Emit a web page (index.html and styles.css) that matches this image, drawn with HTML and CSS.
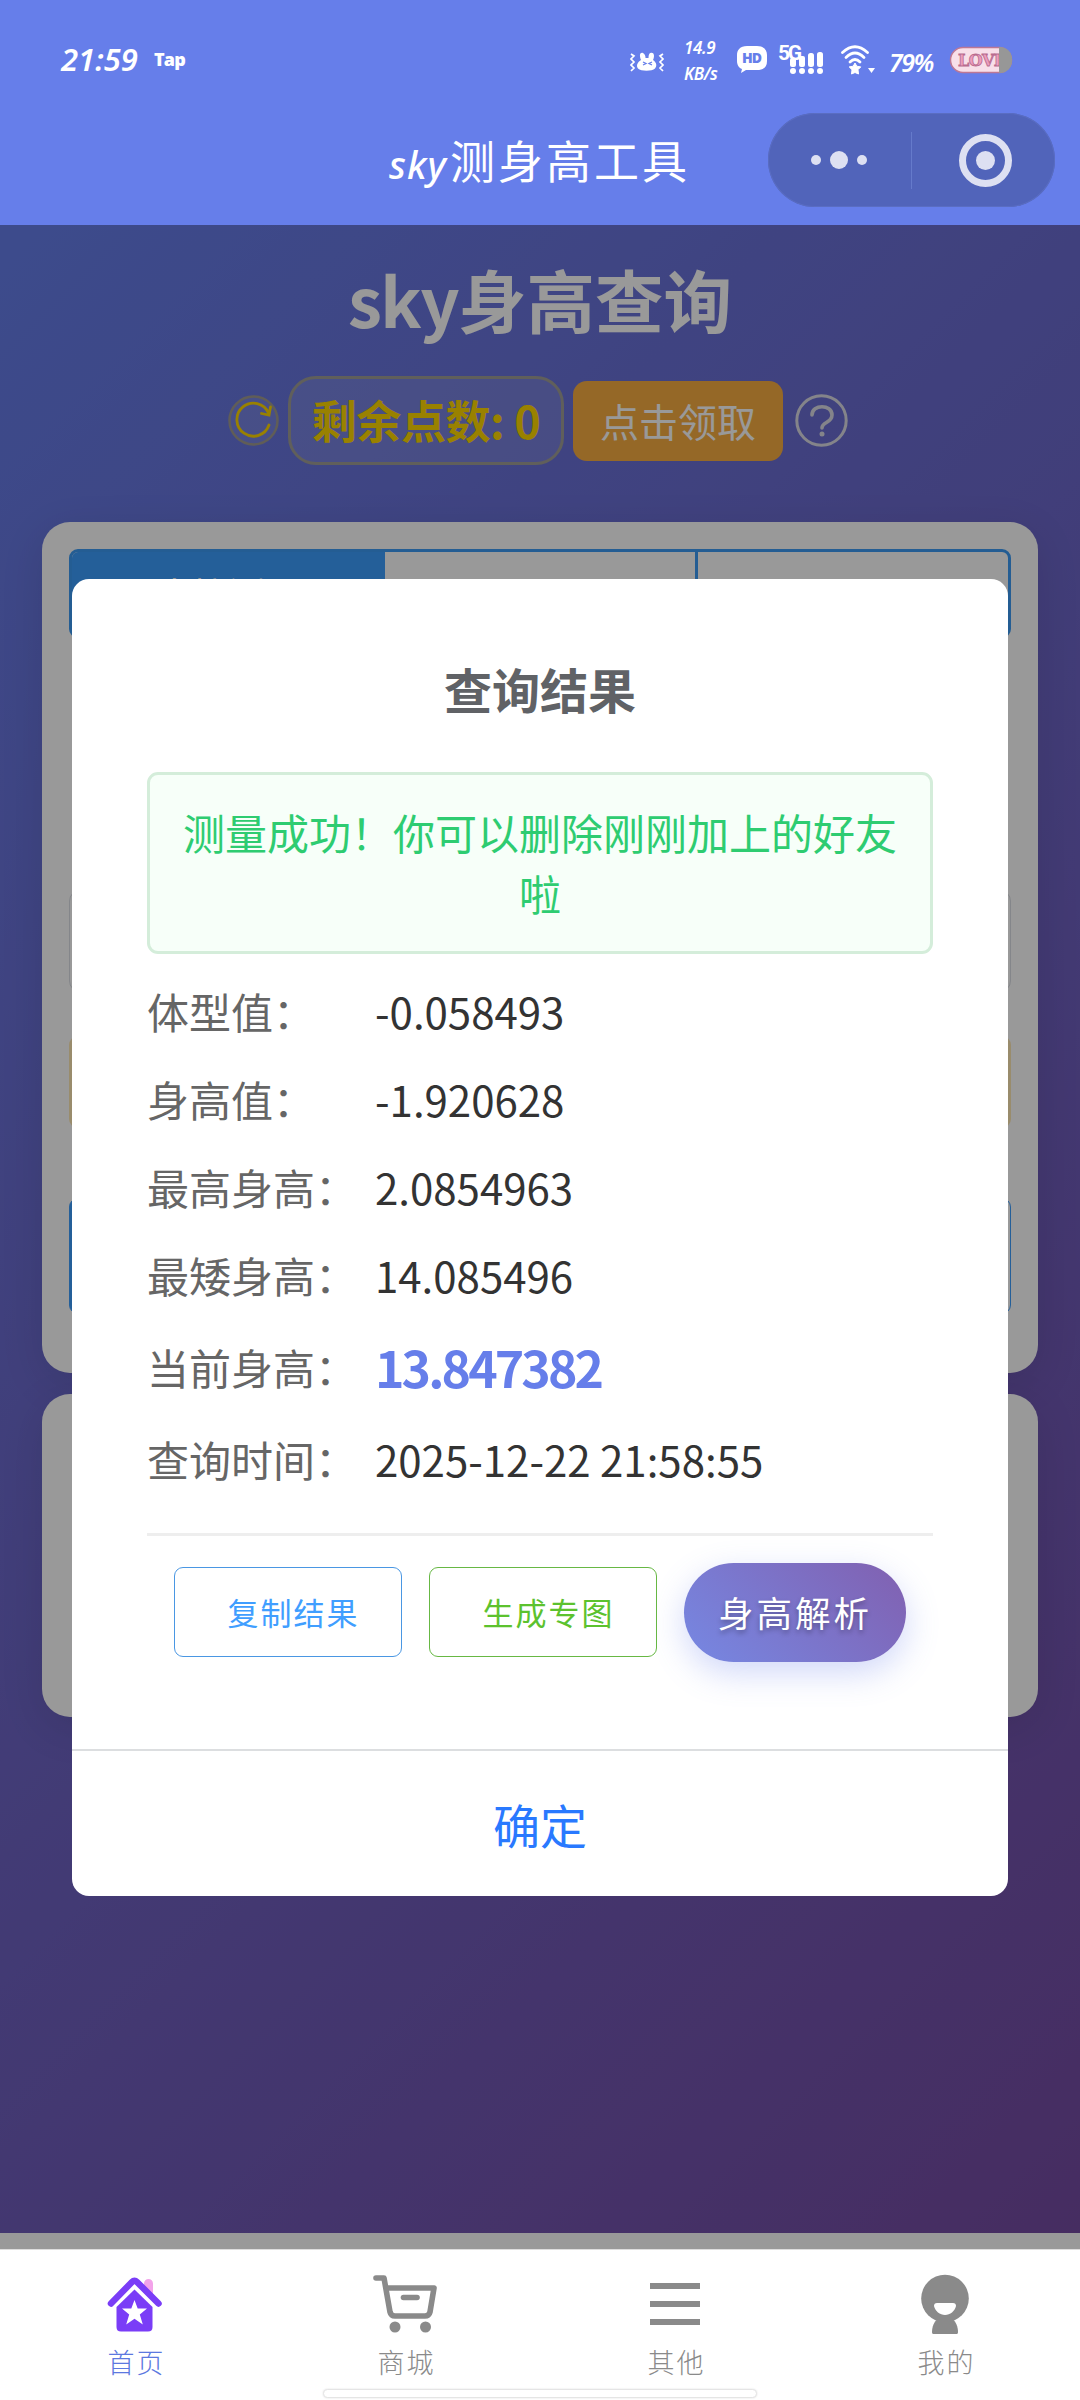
FILE: index.html
```html
<!DOCTYPE html>
<html lang="zh-CN">
<head>
<meta charset="utf-8">
<title>sky测身高工具</title>
<link rel="stylesheet" href="styles.css">
</head>
<body>
<div class="phone">
  <header class="header">
    <div class="status">
      <span class="time">21:59</span>
      <span class="carrier">Tap</span>
      <span class="spacer"></span>
      <svg class="ic-vibrate" width="34" height="20" viewBox="0 0 34 20"><path d="M11 8C9 3 10 0 13 1c2 1 2.500 3 2.500 5h3C18.500 3 19 1 21 .7c3-.5 4 3 2 7.300 4 3 4 6 2 8.500-3 3-14 3-17 0-2-2.500-1-6 3-8.500z" fill="#fff"/><path d="M13 10l3 1.500-3 1.500M22 10l-3 1.500 3 1.500" fill="none" stroke="#667eea" stroke-width="1.300"/><path d="M1 2l3 2-3 3 3 3-3 3 3 3-3 3M33 2l-3 2 3 3-3 3 3 3-3 3 3 3" fill="none" stroke="#fff" stroke-width="1.700"/></svg>
      <span class="speed"><span>14.9</span><span>KB/s</span></span>
      <svg class="ic-hd" width="30" height="28" viewBox="0 0 30 28"><path d="M10 0h10c7 0 10 4 10 9v6c0 6-3 9-10 9h-11l-5 3 1-4c-3-1-5-4-5-8V9c0-5 3-9 10-9z" fill="#fff"/><text x="15" y="17" text-anchor="middle" textLength="20" class="hd-text">HD</text></svg>
      <svg class="ic-signal" width="52" height="36" viewBox="-6 -2 52 36"><g fill="#fff"><rect x="12" y="14" width="6" height="9" rx="2"/><rect x="21" y="12" width="6" height="11" rx="2"/><rect x="30" y="9" width="6" height="14" rx="2.500"/><rect x="39" y="8" width="6" height="15" rx="2.500"/><circle cx="15" cy="27" r="3"/><circle cx="24" cy="27" r="3"/><circle cx="33" cy="27" r="3"/><circle cx="42" cy="27" r="3"/></g><text x="0" y="16" class="g-text" textLength="24">5G</text></svg>
      <svg class="ic-wifi" width="36" height="30" viewBox="0 0 36 30"><g fill="none" stroke="#fff" stroke-width="2.800" stroke-linecap="round"><path d="M1.500 7.500Q14-4 26.500 7.500"/><path d="M5 12.500Q14 3.500 23 12.500"/><path d="M9 17Q14 12 19 17"/></g><path d="M14 18l1.800 3.200 4 .7-2.800 2.800.5 4.300-3.500-1.500-3.500 1.500.5-4.300-2.800-2.800 4-.7z" fill="#fff" stroke="#fff" stroke-linejoin="round"/><path d="M27 23h7l-3.500 5z" fill="#fff"/></svg>
      <span class="percent">79%</span>
      <svg class="ic-battery" width="64" height="28" viewBox="0 0 64 28"><rect x="1.500" y="1.500" width="61" height="25" rx="12.500" fill="#f8dfe9" stroke="#bd7795" stroke-width="1.500"/><text x="9" y="20" textLength="48" class="love">LOVE</text><path d="M50 1h1a12 12 0 0 1 12 12v2a12 12 0 0 1-12 12h-1z" fill="#979797"/></svg>
    </div>
    <div class="nav">
      <h1 class="nav-title"><i>sky</i>测身高工具</h1>
      <div class="capsule">
        <svg width="287" height="94" viewBox="0 0 287 94"><g fill="#dde0f2"><circle cx="48" cy="47" r="5"/><circle cx="71" cy="47" r="9"/><circle cx="94" cy="47" r="5"/><circle cx="217.500" cy="47.500" r="9.500"/></g><path d="M143.500 19v57" stroke="#657acb"/><circle cx="217.500" cy="47.500" r="23" fill="none" stroke="#dde0f2" stroke-width="7"/></svg>
      </div>
    </div>
  </header>

  <main class="page">
    <h2 class="page-title"><span>sky</span>身高查询</h2>
    <div class="points">
      <svg class="refresh" width="51" height="51" viewBox="0 0 51 51"><circle cx="25.500" cy="25.500" r="24" fill="#ffffff1a" stroke="#a09c92" stroke-width="2.500"/><path d="M41 30A16.500 16.500 0 1 1 40.500 18M33.500 18.500l7.500 1.500 1.500-8" fill="none" stroke="#ffd700" stroke-width="2.800" stroke-linecap="round"/></svg>
      <div class="points-pill">剩余点数: 0</div>
      <button class="claim">点击领取</button>
      <svg class="help" width="53" height="53" viewBox="0 0 53 53"><circle cx="26.500" cy="26.500" r="24.700" fill="none" stroke="#dcdce6" stroke-width="3"/><path d="M17 21c0-11 20-11 20 0 0 8-10 7-10 13" fill="none" stroke="#dcdce6" stroke-width="3.600" stroke-linecap="round"/><circle cx="27" cy="40" r="2.500" fill="#dcdce6"/></svg>
    </div>
    <section class="card card-form">
      <div class="tabs"><span class="tab tab-on">直接测量</span><span class="tab"></span><span class="tab"></span></div>
      <div class="field"></div>
      <div class="tip"></div>
      <div class="actions"><span class="act act-fill"></span><span class="act"></span></div>
    </section>
    <section class="card card-info"></section>
  </main>
  <div class="page-foot"></div>

  <nav class="tabbar">
    <a class="item item-on"><svg width="64" height="64" viewBox="0 0 64 64"><path d="M41 22V13.500a4.500 4.500 0 0 1 9 0V28z" fill="#f3a3ea"/><path d="M31.500 19.500L49.500 37V57q0 4.500-4.500 4.500H18q-4.500 0-4.500-4.500V37z" fill="#7a3df7"/><path d="M8 33.500L29 12q2.500-2.500 5 0L55.500 33.500" fill="none" stroke="#7a3df7" stroke-width="6.500" stroke-linecap="round"/><path d="M31.500 30l3.200 8.500h9.300l-7.200 6 3 10-8.300-5.800-8.300 5.800 3-10-7.200-6h9.300z" fill="#fff"/></svg><span>首页</span></a>
    <a class="item"><svg width="64" height="64" viewBox="0 0 64 64"><g fill="none" stroke="#8a8a8a" stroke-width="5.600" stroke-linecap="round" stroke-linejoin="round"><path d="M3 8H11L17 42Q18 46 22 46H52Q56 46 57 42L61 18H14"/><path d="M30.500 27.500H44"/></g><circle cx="22" cy="57" r="5.500" fill="#8a8a8a"/><circle cx="52.500" cy="57" r="5.500" fill="#8a8a8a"/></svg><span>商城</span></a>
    <a class="item"><svg width="64" height="64" viewBox="0 0 64 64"><path d="M7 16h50M7 34h50M7 52h50" stroke="#8a8a8a" stroke-width="6"/></svg><span>其他</span></a>
    <a class="item"><svg width="64" height="64" viewBox="0 0 64 64"><circle cx="32" cy="28.500" r="23.800" fill="#8a8a8a"/><path d="M25 49h14c4 2 6 8 6 13 0 2-1 2-2 2H21c-1 0-2 0-2-2 0-5 2-11 6-13z" fill="#8a8a8a"/><path d="M24 33h16q3 0 3 3c-1 5-6 9-11 9s-10-4-11-9q0-3 3-3z" fill="#fff"/></svg><span>我的</span></a>
    <div class="home-bar"></div>
  </nav>

  <div class="mask">
    <div class="modal">
      <div class="modal-body">
        <h3 class="modal-title">查询结果</h3>
        <p class="success">测量成功！你可以删除刚刚加上的好友啦</p>
        <dl class="rows">
          <div class="row"><dt>体型值：</dt><dd>-0.058493</dd></div>
          <div class="row"><dt>身高值：</dt><dd>-1.920628</dd></div>
          <div class="row"><dt>最高身高：</dt><dd>2.0854963</dd></div>
          <div class="row"><dt>最矮身高：</dt><dd>14.085496</dd></div>
          <div class="row row-now"><dt>当前身高：</dt><dd>13.847382</dd></div>
          <div class="row"><dt>查询时间：</dt><dd>2025-12-22 21:58:55</dd></div>
        </dl>
        <div class="btns">
          <button class="btn btn-copy">复制结果</button>
          <button class="btn btn-image">生成专图</button>
          <button class="btn btn-explain">身高解析</button>
        </div>
      </div>
      <button class="confirm">确定</button>
    </div>
  </div>
</div>
</body>
</html>
```
FILE: styles.css
```css
* { box-sizing: border-box; margin: 0; padding: 0; }
body { width: 1080px; height: 2400px; overflow: hidden; font-family: "Noto Sans CJK SC", sans-serif; }
button { font-family: inherit; border: 0; background: none; }
svg { display: block; flex: none; }

.phone { position: relative; width: 1080px; height: 2400px; display: flex; flex-direction: column; background: #fff; }

.header { height: 225px; background: #667eea; color: #fff; display: flex; flex-direction: column; }
.status { height: 113px; padding: 6px 67px 0 61px; display: flex; align-items: center; font-family: "Noto Sans", sans-serif; font-weight: 700; white-space: nowrap; }
.time { width: 93px; font-size: 31px; font-style: italic; font-weight: 600; letter-spacing: 0; padding-bottom: 2px; }
.carrier { font-family: "Open Sans", sans-serif; font-size: 18px; font-weight: 800; letter-spacing: -.8px; padding-bottom: 2px; }
.spacer { flex: 1; }
.ic-vibrate { margin: 4px 20px 0 0; }
.speed { display: flex; flex-direction: column; width: 53px; padding-top: 2px; font-size: 17px; line-height: 26px; font-style: italic; font-weight: 600; letter-spacing: -.4px; }
.ic-hd { margin-right: 5px; }
.ic-signal { margin-right: 17px; }
.ic-wifi { margin-right: 12px; }
.percent { width: 60px; font-size: 25px; font-style: italic; font-weight: 600; letter-spacing: -1.500px; padding-top: 5px; }
.hd-text { font: 800 14px "Open Sans", sans-serif; fill: #667eea; }
.g-text { font: 700 21px "Roboto", sans-serif; fill: #fff; }
.love { font: 700 16px "DejaVu Serif", serif; fill: #ed9dbd; stroke: #b96c8f; stroke-width: .8px; }

.nav { height: 94px; display: grid; grid-template-columns: 1fr auto 1fr; align-items: center; padding-right: 25px; }
.nav-title { grid-column: 2; margin-left: 24px; padding-bottom: 2px; font-size: 45px; font-weight: 400; letter-spacing: 3px; white-space: nowrap; }
.nav-title i { font-family: "Noto Sans", sans-serif; font-size: 38px; font-weight: 500; letter-spacing: 1px; margin-right: 3px; }
.capsule { justify-self: end; width: 287px; height: 94px; border-radius: 47px; background: #5164ba; box-shadow: inset 0 0 0 1px #5a6dc2; }

.page { height: 2008px; background: linear-gradient(135deg, #667eea 0%, #764ba2 100%); display: flex; flex-direction: column; align-items: center; }
.page-title { margin-top: 23px; height: 106px; line-height: 102px; font-size: 68.500px; font-weight: 700; color: #fff; }
.page-title span { letter-spacing: -1.500px; }
.points { height: 89px; margin: 22px 0 57px; display: flex; align-items: center; padding-right: 4px; }
.points-pill { width: 276px; height: 89px; margin: 0 9px; border: 3px solid #a09f98; border-radius: 28px; background: #ffffff1a; color: #ffd700; font-size: 45px; font-weight: 700; line-height: 81px; text-align: center; white-space: nowrap; letter-spacing: -.4px; }
.claim { width: 210px; height: 80px; margin-right: 12px; padding-bottom: 2px; border-radius: 14px; background: #f9ae42; color: #fff; font-size: 39px; }
.card { width: 996px; border-radius: 28px; background: #fff; box-shadow: 0 11px 44px rgba(0, 0, 0, .1); padding: 27px; }
.card-form { height: 851px; margin-bottom: 21px; }
.card-info { height: 323px; }
.tabs { display: grid; grid-template-columns: 313px 310px 1fr; height: 89px; border: 3px solid #3d9cf5; border-radius: 9px; overflow: hidden; }
.tab { border-left: 3px solid #3d9cf5; font-size: 36px; line-height: 53px; padding-top: 15px; text-align: center; }
.tab:first-child, .tab-on + .tab { border-left: 0; }
.tab-on { background: #3c9eff; color: #fff; }
.field { height: 102px; margin-top: 252px; border: 1px solid #dcdfe6; border-radius: 11px; background: #fff; }
.tip { height: 92px; margin-top: 44px; border-radius: 9px; background: #ffe9b5; }
.actions { height: 116px; margin-top: 70px; display: grid; grid-template-columns: 1fr 1fr; }
.act { border: 1px solid #3c9eff; border-radius: 0 9px 9px 0; }
.act-fill { background: #3c9eff; border-radius: 9px 0 0 9px; }
.page-foot { height: 17px; background: #fff; border-bottom: 1px solid #ddd; }

.tabbar { position: relative; height: 150px; background: #fff; display: grid; grid-template-columns: repeat(4, 1fr); }
.item { display: flex; flex-direction: column; align-items: center; padding-top: 20px; color: #8a8a8a; font-size: 27px; font-weight: 300; line-height: 38px; letter-spacing: 2px; }
.item span { margin-top: 9px; padding-left: 3px; }
.item-on { color: #5c78e0; }
.home-bar { position: absolute; left: 323px; bottom: 2px; width: 434px; height: 9px; border: 1px solid #e5e5e5; border-radius: 5px; background: #fff; box-shadow: 0 0 2px #ddd; }

.mask { position: absolute; top: 225px; left: 0; width: 1080px; height: 2024px; background: rgba(0, 0, 0, .4); display: flex; justify-content: center; align-items: center; }
.modal { width: 936px; height: 1317px; border-radius: 17px; background: #fff; display: flex; flex-direction: column; overflow: hidden; }
.modal-body { height: 1172px; padding: 75px; border-bottom: 2px solid #dcdee0; }
.modal-title { height: 74px; line-height: 69px; font-size: 48px; font-weight: 700; color: #606266; text-align: center; }
.success { height: 182px; margin-top: 44px; padding: 26px 24px; border: 3px solid #d4edda; border-radius: 11px; background: #f7fff9; color: #2ecc71; font-size: 42px; line-height: 61px; text-align: center; }
.rows { display: flex; flex-direction: column; gap: 27px; height: 582px; padding-top: 26px; border-bottom: 3px solid #eee; }
.row { display: flex; align-items: center; height: 61px; font-size: 42px; white-space: nowrap; }
.row dt { width: 228px; color: #666; }
.row dd { color: #333; }
.row-now { height: 69px; }
.row-now dd { font-size: 50px; font-weight: 700; letter-spacing: -2.900px; color: #667eea; }
.btns { display: flex; justify-content: center; align-items: center; gap: 27px; height: 99px; margin-top: 27px; }
.btn { width: 228px; height: 90px; border-radius: 9px; font-size: 31px; padding: 0 0 2px 11px; letter-spacing: 2px; white-space: nowrap; }
.btn-copy { border: 1px solid #4a97e3; color: #409eff; }
.btn-image { border: 1px solid #67b844; color: #5cc22e; }
.btn-explain { width: 222px; height: 99px; border-radius: 50px; padding: 0 0 2px; background: linear-gradient(45deg, #7688e3, #8160b0); color: #fff; font-size: 35.500px; letter-spacing: 3px; text-shadow: 0 3px 5px rgba(0, 0, 0, .3); box-shadow: 0 11px 33px rgba(102, 126, 234, .3); }
.confirm { flex: 1; color: #2979ff; font-size: 47px; }
```
